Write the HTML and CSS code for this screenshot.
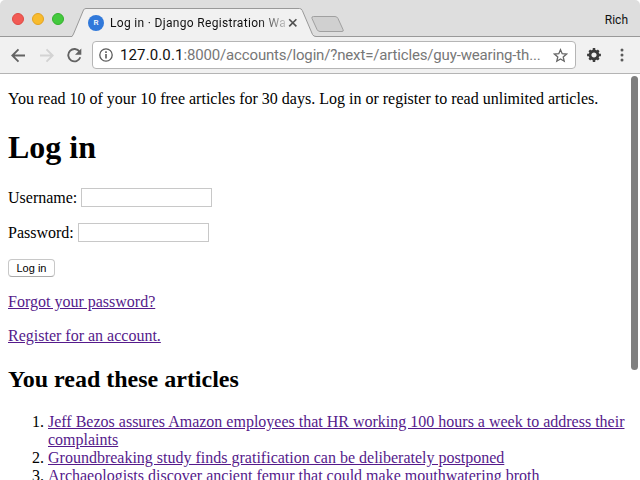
FILE: index.html
```html
<!DOCTYPE html>
<html lang="en">
<head>
<meta charset="utf-8">
<title>Log in · Django Registration Wall</title>
<link rel="stylesheet" href="styles.css">
</head>
<body>
<div class="window">
  <header class="tabstrip">
    <div class="lights"><i class="close"></i><i class="minimise"></i><i class="expand"></i></div>
    <div class="tab">
      <svg class="tab-shape" width="244" height="29" viewBox="0 0 244 29"><path d="M0 28.500L1.500 26L11.500 2Q12.200 .5 14 .5H227.500Q229.500 .5 230.300 2.500L240.500 26.500Q241.500 28.500 244 28.500V29H0Z" fill="#f1f1f1"/><path d="M0 28.500L1.500 26L11.500 2Q12.200 .5 14 .5H227.500Q229.500 .5 230.300 2.500L240.500 26.500Q241.500 28.500 244 28.500" fill="none" stroke="#999"/></svg>
      <span class="favicon">R</span>
      <span class="tab-title">Log in · Django Registration Wa</span>
      <svg class="tab-close" width="10" height="10" viewBox="0 0 10 10"><path d="M1.200 1.200l7.200 7.200M8.400 1.200l-7.200 7.200" stroke="#505050" stroke-width="1.600"/></svg>
    </div>
    <svg class="new-tab" width="34" height="17" viewBox="0 0 34 17"><path d="M2.500.5H24Q26 .5 27 2.500L32 13.500Q33 15.500 31 15.500H9Q7 15.500 6 13.500L1 2.500Q.3 .5 2.500 .5Z" fill="#d0d0d0" stroke="#a0a0a0"/></svg>
    <span class="profile">Rich</span>
  </header>
  <nav class="toolbar">
    <svg class="back" width="15" height="15" viewBox="0 0 15 15"><path d="M14 7.500H1.500M7.500 1.300L1.300 7.500l6.200 6.200" fill="none" stroke="#636363" stroke-width="1.900"/></svg>
    <svg class="forward" width="15" height="15" viewBox="0 0 15 15"><path d="M1 7.500h12.500M7.500 1.300l6.200 6.200-6.200 6.200" fill="none" stroke="#d3d3d3" stroke-width="1.900"/></svg>
    <svg class="reload" width="15" height="15" viewBox="0 0 15 15"><path d="M12.600 3.700A6.200 6.200 0 1 0 13.300 9.300" fill="none" stroke="#636363" stroke-width="1.900"/><path d="M14.300 .4V6.700H8Z" fill="#636363"/></svg>
    <div class="omnibox">
      <svg class="info" width="14" height="14" viewBox="0 0 14 14"><circle cx="7" cy="7" r="6.200" fill="none" stroke="#5a5a5a" stroke-width="1.300"/><path d="M7 6v4.500M7 3.300v1.600" stroke="#5a5a5a" stroke-width="1.600"/></svg>
      <span class="url"><b>127.0.0.1</b>:8000/accounts/login/?next=/articles/guy-wearing-th...</span>
      <svg class="star" width="15" height="15" viewBox="0 0 15 15"><path d="M7.500 1.700L9.200 5.700 13.500 6.100 10.200 8.900 11.200 13.200 7.500 10.900 3.800 13.200 4.800 8.900 1.500 6.100 5.800 5.700Z" fill="none" stroke="#666" stroke-width="1.300"/></svg>
    </div>
    <svg class="gear" width="14" height="14" viewBox="-7 -7 14 14"><circle r="4" fill="none" stroke="#3c3c3c" stroke-width="2.800"/><path d="M0-6.900V-4M0 4V6.900M-6.900 0H-4M4 0H6.900M-4.700-4.700l2 2M2.700 2.700l2 2M4.700-4.700l-2 2M-2.700 2.700l-2 2" stroke="#3c3c3c" stroke-width="2.500"/></svg>
    <svg class="more" width="4" height="14" viewBox="0 0 4 14"><g fill="#5a5a5a"><circle cx="2" cy="2" r="1.500"/><circle cx="2" cy="7" r="1.500"/><circle cx="2" cy="12" r="1.500"/></g></svg>
  </nav>
  <main class="page">
    <p><span class="notice">You read 10 of your 10 free articles for 30 days. Log in or register to read unlimited articles.</span></p>
    <h1>Log in</h1>
    <form>
      <div class="field"><label for="user">Username:</label><input id="user" type="text"></div>
      <div class="field"><label for="pass">Password:</label><input id="pass" type="password"></div>
      <button type="button">Log in</button>
    </form>
    <p><a href="#">Forgot your password?</a></p>
    <p><a href="#">Register for an account.</a></p>
    <h2>You read these articles</h2>
    <ol>
      <li><a href="#">Jeff Bezos assures Amazon employees that HR working 100 hours a week to address their complaints</a></li>
      <li><a href="#">Groundbreaking study finds gratification can be deliberately postponed</a></li>
      <li><a href="#">Archaeologists discover ancient femur that could make mouthwatering broth</a></li>
    </ol>
    <div class="scroll-thumb"></div>
  </main>
</div>
</body>
</html>
```
FILE: styles.css
```css
* { box-sizing: border-box; }
html { background: #fff; }
body { margin: 0; }
svg { display: block; flex: none; }
.window {
  width: 640px;
  height: 480px;
  display: flex;
  flex-direction: column;
  overflow: hidden;
  border-radius: 5px 5px 0 0;
  background: #fff;
  font-family: Roboto, sans-serif;
}
.tabstrip {
  height: 37px;
  flex: none;
  display: flex;
  align-items: flex-start;
  background: #dedede;
  box-shadow: inset 0 -1px #999;
}
.lights { display: flex; gap: 8px; padding: 13px 0 0 12px; width: 72px; flex: none; }
.lights i { width: 12px; height: 12px; border-radius: 50%; }
.close { background: #f25a54; border: 1px solid #de4a45; }
.minimise { background: #f8bb2d; border: 1px solid #e2a322; }
.expand { background: #43c93d; border: 1px solid #34b02e; }
.tab {
  position: relative;
  width: 244px;
  height: 29px;
  margin-top: 8px;
  flex: none;
  display: flex;
  align-items: center;
  padding-left: 16px;
}
.tab-shape { position: absolute; left: 0; top: 0; }
.favicon {
  position: relative;
  width: 16px;
  height: 16px;
  border-radius: 50%;
  background: #3179da;
  color: #fff;
  font: 500 8px/16px Roboto, sans-serif;
  text-align: center;
}
.tab-title {
  position: relative;
  width: 176px;
  margin-left: 6px;
  font-size: 12px;
  line-height: 16px;
  letter-spacing: .32px;
  white-space: nowrap;
  color: #111;
  -webkit-mask-image: linear-gradient(90deg, #000 148px, transparent 182px);
  mask-image: linear-gradient(90deg, #000 148px, transparent 182px);
}
.tab-close { position: relative; margin-left: 2px; }
.new-tab { margin: 16px 0 0 -5px; }
.profile { margin: 12px 12px 0 auto; font-size: 12px; line-height: 16px; color: #111; }
.toolbar {
  height: 37px;
  flex: none;
  display: flex;
  align-items: center;
  padding-left: 11px;
  background: #f1f1f1;
  border-bottom: 1px solid #b4b4b4;
}
.forward { margin-left: 13px; }
.reload { margin-left: 13px; }
.omnibox {
  width: 484px;
  height: 28px;
  margin-left: 10px;
  display: flex;
  align-items: center;
  padding-left: 6px;
  background: #fff;
  border: 1px solid #b5b5b5;
  border-radius: 4px;
}
.url {
  width: 422px;
  margin-left: 7px;
  font-size: 15px;
  line-height: 20px;
  letter-spacing: -.16px;
  white-space: nowrap;
  color: #777;
}
.url b { font-weight: 400; letter-spacing: .12px; color: #111; }
.star { margin-left: 11px; }
.gear { margin-left: 11px; }
.more { margin-left: 19px; }
.page {
  position: relative;
  flex: 1;
  min-height: 0;
  overflow: hidden;
  padding: 0 8px;
  color: #000;
  font: 16px/18px "Liberation Serif", serif;
}
p { margin: 16px 0; }
h1 { margin: 21px 0 22px; font-size: 32px; line-height: 37px; }
.field { display: flex; align-items: center; height: 19px; margin-bottom: 16px; gap: 4px; }
.field input {
  width: 131px;
  height: 19px;
  padding: 0 2px;
  border: 1px solid #c8c8c8;
  background: #fff;
}
button {
  display: block;
  width: 47px;
  height: 18px;
  margin-top: 17px;
  padding: 0;
  border: 1px solid #c8c8c8;
  border-bottom-color: #aaa;
  border-radius: 4px;
  background: #fff;
  color: #000;
  font: 11px/14px "Liberation Sans", sans-serif;
}
a { color: #551a8b; text-decoration: underline; }
h2 { margin: 20px 0; font-size: 24px; line-height: 28px; }
ol { margin: 0; padding-left: 40px; }
.scroll-thumb {
  position: absolute;
  top: 2px;
  right: 2px;
  width: 7px;
  height: 294px;
  border-radius: 4px;
  background: #7f7f7f;
}
```
